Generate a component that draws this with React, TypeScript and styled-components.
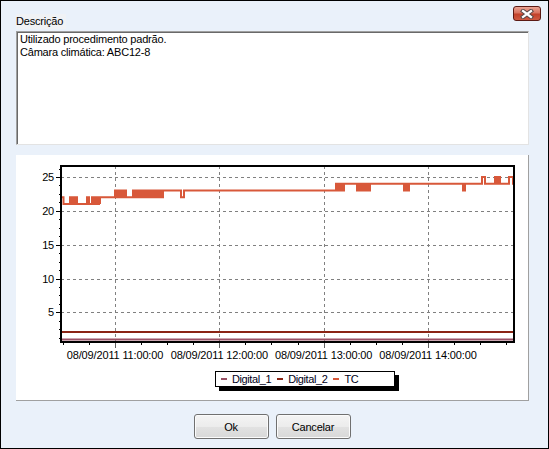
import styled, { createGlobalStyle } from "styled-components";

const GlobalStyle = createGlobalStyle`
  html, body { margin: 0; padding: 0; background: #fff; }
  body { font-family: "Liberation Sans", Arial, sans-serif; }
`;

const Window = styled.div`
  box-sizing: border-box;
  width: 549px;
  height: 449px;
  border: 1px solid #000;
  background: #eaf1fa;
  display: flex;
  flex-direction: column;
  font: 11px "Liberation Sans", Arial, sans-serif;
  letter-spacing: -0.2px;
  color: #000;
`;

const TopBar = styled.div`
  height: 30px;
  display: flex;
  justify-content: space-between;
  align-items: flex-start;
  padding: 0 7px 0 15px;
`;

const Caption = styled.span`
  margin-top: 13px;
  line-height: 15px;
  padding-right: 3px;
  background: #f0f2f5;
`;

const CloseButton = styled.button`
  box-sizing: border-box;
  margin-top: 5px;
  width: 28px;
  height: 15px;
  padding: 0;
  border: 1px solid #5b1a14;
  border-radius: 3px;
  background: linear-gradient(#eaa495 0%, #d9735f 45%, #c2412a 55%, #cf5a42 100%);
  display: flex;
  align-items: center;
  justify-content: center;
`;

const TextBox = styled.div`
  box-sizing: border-box;
  margin: 0 19px 0 15px;
  height: 114px;
  padding: 1px 3px;
  background: #fff;
  border: 1px solid;
  border-color: #a0a0a0 #e3e3e3 #e3e3e3 #a0a0a0;
  box-shadow: inset 1px 1px 0 #696969;
  line-height: 13px;
`;

const ChartPanel = styled.div`
  box-sizing: border-box;
  margin: 10px 19px 0 15px;
  height: 246px;
  background: #fff;
  border-right: 1px solid #a0a0a0;
  border-bottom: 1px solid #a0a0a0;
  display: flex;
  flex-direction: column;
`;

const LegendRow = styled.div`
  display: flex;
  padding-left: 199px;
  margin-top: 11px;
`;

const Legend = styled.div`
  box-sizing: border-box;
  width: 180px;
  height: 16px;
  padding: 0 4px 0 5px;
  border: 1px solid #000;
  box-shadow: 4px 4px 0 #000;
  background: #fff;
  display: flex;
  align-items: center;
  letter-spacing: -0.4px;
  color: #000018;
`;

const LegendItem = styled.span`
  display: flex;
  align-items: center;
  margin-right: 6px;
`;

const Swatch = styled.i<{ $color: string }>`
  width: 6px;
  height: 2px;
  margin-right: 5px;
  background: ${(p) => p.$color};
`;

const ButtonRow = styled.div`
  margin-top: 13px;
  padding-right: 5px;
  display: flex;
  justify-content: center;
  gap: 7px;
`;

const Button = styled.button`
  box-sizing: border-box;
  width: 75px;
  height: 25px;
  padding: 0;
  border: 1px solid #707070;
  border-radius: 3px;
  background: linear-gradient(#f4f4f4 0%, #ececec 50%, #e2e2e2 51%, #d8d8d8 100%);
  box-shadow: inset 0 0 0 1px #fbfbfb;
  font: 11px "Liberation Sans", Arial, sans-serif;
  letter-spacing: -0.2px;
  color: #000;
`;

const AxisText = styled.text`
  font: 11px "Liberation Sans", Arial, sans-serif;
  fill: #000;
`;

const COLORS = {
  digital1: "#985064",
  digital2: "#8b2515",
  tc: "#d8583a",
};

// value -> y, hour -> x (panel coordinates)
const yOf = (v: number) => 22 + (25 - v) * 6.77;
const xOfHour = (h: number) => 99 + (h - 11) * 104.33;

const PLOT = { x0: 45, y0: 11, x1: 498, y1: 187 };

function buildTc(): string {
  const steps: [number, number][] = [];
  const push = (x: number, v: number) => steps.push([x - 16, v]);
  const block = (a: number, b: number, base: number, alt: number) => {
    for (let x = a; x < b; x += 1) push(x, (x - a) % 2 === 0 ? alt : base);
    push(b, base);
  };
  push(62, 22);
  push(63.5, 21);
  block(70, 77, 21, 22);
  push(87, 22);
  push(89, 21);
  block(92, 95, 21, 22);
  block(97, 100, 21, 22);
  push(100, 22);
  block(115, 127, 22, 23);
  block(133, 136, 22, 23);
  block(138, 147, 22, 23);
  block(148, 155, 22, 23);
  block(157, 163, 22, 23);
  push(163, 23);
  push(181, 22);
  push(184, 23);
  push(336, 24);
  block(337, 344, 24, 23);
  block(357, 364, 24, 23);
  block(365, 371, 24, 23);
  block(404, 409, 24, 23);
  push(463, 23);
  push(465, 24);
  push(482, 25);
  push(485, 24);
  block(495, 500, 24, 25);
  push(509, 25);
  push(513, 24);

  let d = `M${steps[0][0]} ${yOf(steps[0][1]).toFixed(1)}`;
  for (let i = 1; i < steps.length; i++) {
    d += ` H${steps[i][0]} V${yOf(steps[i][1]).toFixed(1)}`;
  }
  d += ` H${PLOT.x1}`;
  return d;
}

const Chart = () => {
  const majors = [5, 10, 15, 20, 25];
  const minors: number[] = [];
  for (let v = 1.25; v <= 26.3; v += 1.25) if (v % 5 !== 0) minors.push(v);
  const hours = [11, 12, 13, 14];
  const quarters: number[] = [];
  for (let h = 10.5; h <= 14.76; h += 0.25) quarters.push(h);
  const px = (n: number) => Math.round(n) + 0.5;

  return (
    <svg width={512} height={205}>
      <defs>
        <clipPath id="plot">
          <rect x={PLOT.x0} y={PLOT.y0} width={PLOT.x1 - PLOT.x0} height={PLOT.y1 - PLOT.y0} />
        </clipPath>
      </defs>
      {majors.map((v) => (
        <line key={`g${v}`} x1={PLOT.x0} x2={PLOT.x1} y1={px(yOf(v))} y2={px(yOf(v))}
          stroke="#808080" strokeDasharray="3 3" />
      ))}
      {hours.map((h) => (
        <line key={`vg${h}`} x1={px(xOfHour(h))} x2={px(xOfHour(h))} y1={PLOT.y0} y2={PLOT.y1}
          stroke="#808080" strokeDasharray="3 3" />
      ))}
      {majors.map((v) => (
        <line key={`mt${v}`} x1={40} x2={45} y1={px(yOf(v))} y2={px(yOf(v))} stroke="#000" />
      ))}
      {minors.map((v) => (
        <line key={`nt${v}`} x1={43} x2={45} y1={px(yOf(v))} y2={px(yOf(v))} stroke="#000" />
      ))}
      {quarters.map((h) => {
        const major = Math.abs(h - Math.round(h)) < 0.01;
        return (
          <line key={`xt${h}`} x1={px(xOfHour(h))} x2={px(xOfHour(h))} y1={188}
            y2={major ? 193 : 190} stroke={major ? "#606060" : "#000"} />
        );
      })}
      <g clipPath="url(#plot)">
        <line x1={PLOT.x0} x2={PLOT.x1} y1={yOf(1)} y2={yOf(1)} stroke={COLORS.digital1} strokeWidth={2} />
        <line x1={PLOT.x0} x2={PLOT.x1} y1={177} y2={177} stroke={COLORS.digital2} strokeWidth={2} />
        <path d={buildTc()} fill="none" stroke={COLORS.tc} strokeWidth={2} />
      </g>
      <rect x={PLOT.x0} y={PLOT.y0} width={PLOT.x1 - PLOT.x0} height={PLOT.y1 - PLOT.y0}
        fill="none" stroke="#000" strokeWidth={2} />
      {majors.map((v) => (
        <AxisText key={`yl${v}`} x={38} y={Math.round(yOf(v)) + 4} textAnchor="end">{v}</AxisText>
      ))}
      {hours.map((h) => (
        <AxisText key={`xl${h}`} x={xOfHour(h)} y={204} textAnchor="middle" letterSpacing={-0.15}>
          {`08/09/2011 ${h}:00:00`}
        </AxisText>
      ))}
    </svg>
  );
};

const CloseGlyph = () => (
  <svg width={14} height={10} viewBox="0 0 14 10">
    <path d="M3 2 L11 8 M11 2 L3 8" stroke="#5a4a48" strokeWidth={4.2} strokeLinecap="square" />
    <path d="M3 2 L11 8 M11 2 L3 8" stroke="#fff" strokeWidth={2.2} strokeLinecap="square" />
  </svg>
);

const App = () => (
  <>
    <GlobalStyle />
    <Window>
      <TopBar>
        <Caption>Descrição</Caption>
        <CloseButton aria-label="Fechar">
          <CloseGlyph />
        </CloseButton>
      </TopBar>
      <TextBox>
        Utilizado procedimento padrão.
        <br />
        Câmara climática: ABC12-8
      </TextBox>
      <ChartPanel>
        <Chart />
        <LegendRow>
          <Legend>
            <LegendItem>
              <Swatch $color={COLORS.digital1} />
              Digital_1
            </LegendItem>
            <LegendItem>
              <Swatch $color={COLORS.digital2} />
              Digital_2
            </LegendItem>
            <LegendItem>
              <Swatch $color={COLORS.tc} />
              TC
            </LegendItem>
          </Legend>
        </LegendRow>
      </ChartPanel>
      <ButtonRow>
        <Button>Ok</Button>
        <Button>Cancelar</Button>
      </ButtonRow>
    </Window>
  </>
);

export default App;
